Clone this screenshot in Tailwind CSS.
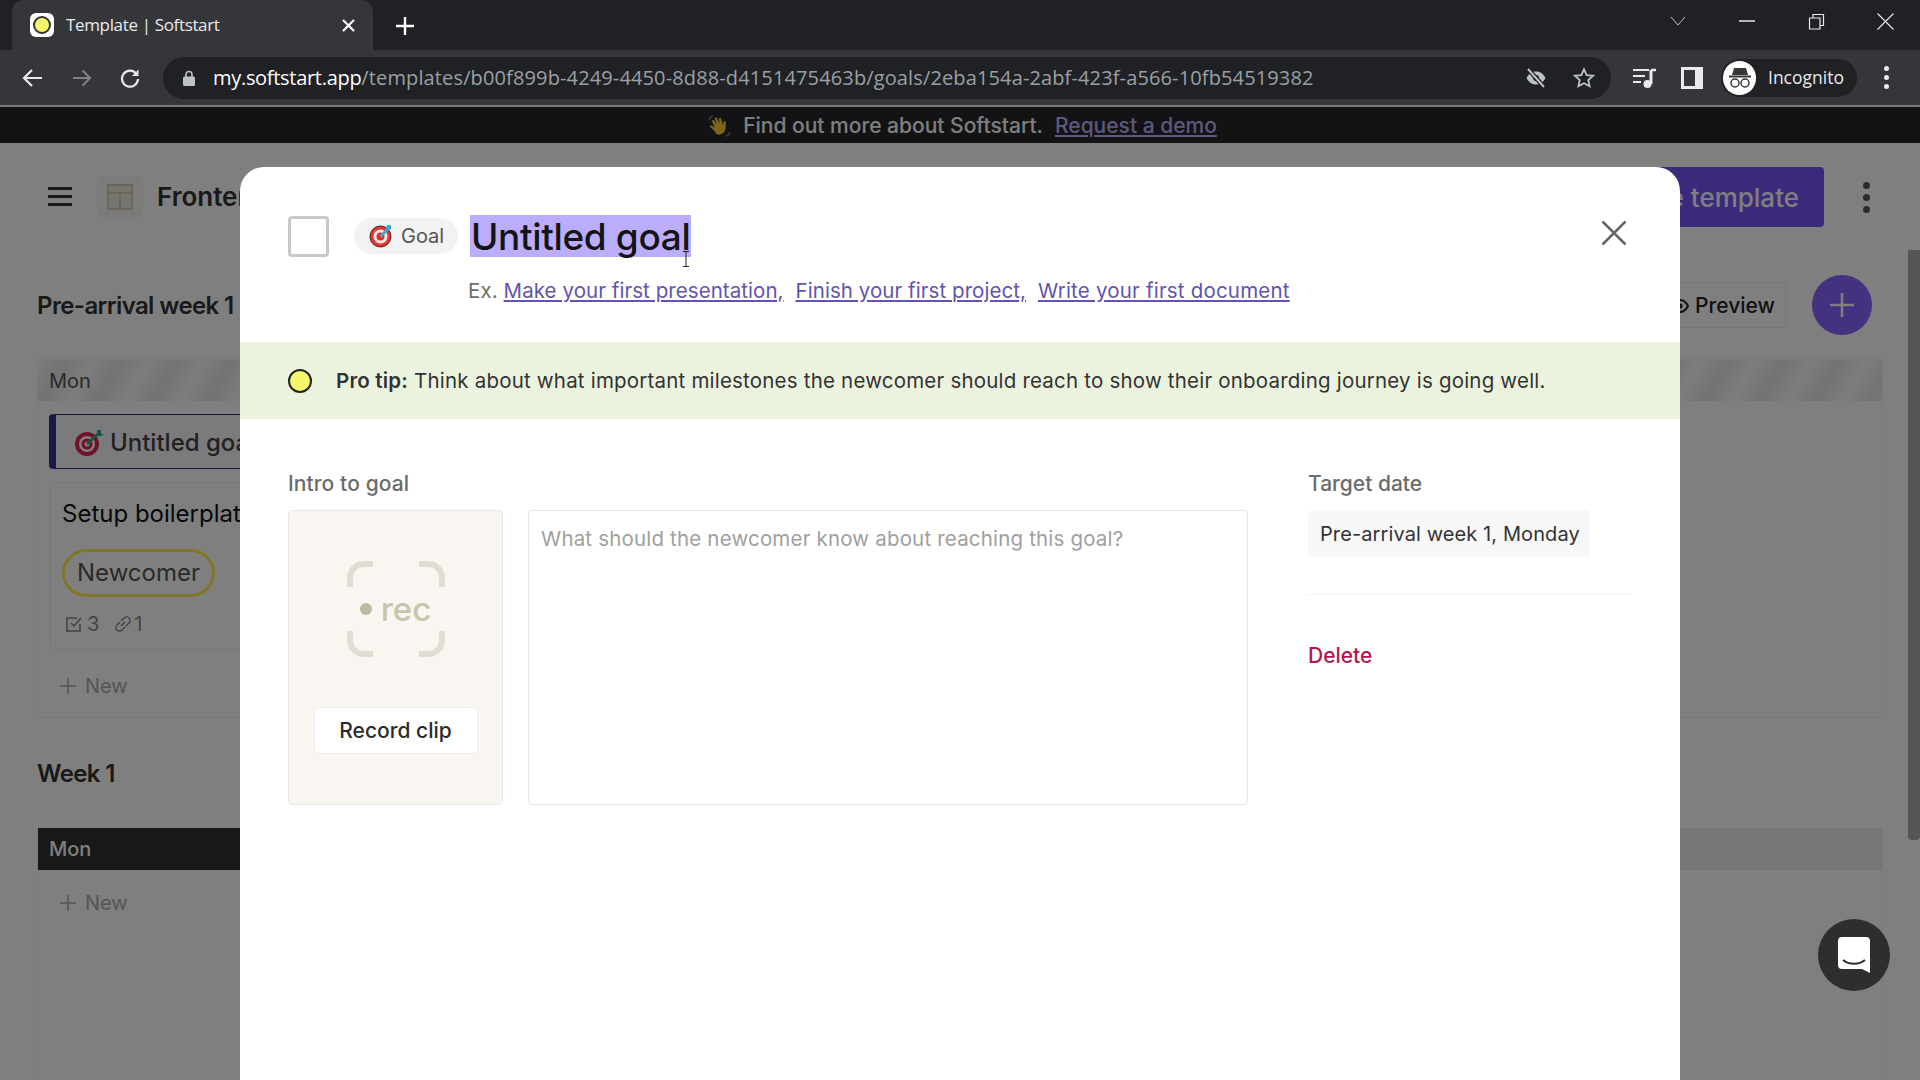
<!DOCTYPE html>
<html lang="en">
<head>
    <meta charset="UTF-8">
    <title>Template | Softstart</title>
    <script src="https://cdn.jsdelivr.net/npm/@tailwindcss/browser@4"></script>
</head>
<body class="h-[1080px] w-[1920px] overflow-hidden flex flex-col bg-white font-['Inter',sans-serif]">

    <!-- Tab strip -->
    <div class="h-[50px] bg-[#202124] flex items-end pl-3 shrink-0">
        <div class="h-[50px] w-[361px] bg-[#35363a] rounded-t-xl flex items-center pl-[18px] pr-[18px] text-white">
            <div class="w-6 h-6 bg-white rounded-md flex items-center justify-center">
                <div class="w-[18px] h-[18px] rounded-full bg-[#f5f76b] border-2 border-[#333]"></div>
            </div>
            <span class="ml-3 text-[17px] font-['Open_Sans',sans-serif] text-[#e8eaed] tracking-[-0.35px]">Template | Softstart</span>
            <svg class="ml-auto" width="13" height="13" viewBox="0 0 13 13"><path d="M1 1 12 12M12 1 1 12" stroke="#fff" stroke-width="2.2"/></svg>
        </div>
        <svg class="ml-[22px] mb-[14px]" width="20" height="20" viewBox="0 0 20 20"><path d="M10 1v18M1 10h18" stroke="#fff" stroke-width="2.4"/></svg>
        <div class="ml-auto flex items-center h-[50px] pb-2">
            <svg width="16" height="10" viewBox="0 0 16 10"><path d="M1 1l7 8 7-8" fill="none" stroke="#bdc1c6" stroke-width="1"/></svg>
            <svg class="ml-[53px]" width="16" height="2" viewBox="0 0 16 2"><path d="M0 1h16" stroke="#e8eaed" stroke-width="1.5"/></svg>
            <svg class="ml-[53px]" width="17" height="17" viewBox="0 0 17 17"><path d="M1.500 5h10.500v11h-10.500zM5 5V1.500h10.500V12.500H12" fill="none" stroke="#e8eaed" stroke-width="1.2"/></svg>
            <svg class="ml-[52px] mr-[26px]" width="17" height="17" viewBox="0 0 17 17"><path d="M.5.5l16 16M16.500.5l-16 16" stroke="#e8eaed" stroke-width="1.1"/></svg>
        </div>
    </div>

    <!-- Toolbar -->
    <div class="h-[57px] bg-[#35363a] border-b-2 border-[#77787a] flex items-center shrink-0">
        <svg class="ml-[22px]" width="21" height="20" viewBox="0 0 21 20"><path d="M20 10H3M10 2l-8 8 8 8" fill="none" stroke="#e8eaed" stroke-width="2.200"/></svg>
        <svg class="ml-[29px]" width="20" height="20" viewBox="0 0 21 20"><path d="M1 10h17M11 2l8 8-8 8" fill="none" stroke="#808285" stroke-width="2.200"/></svg>
        <svg class="ml-[28px]" width="20" height="20" viewBox="0 0 20 20"><path d="M16.500 6A8 8 0 1 0 18 11" fill="none" stroke="#e8eaed" stroke-width="2.200"/><path d="M18.500 1.500v6.500h-6.500z" fill="#e8eaed"/></svg>
        <div class="ml-[23px] h-[42px] w-[1448px] bg-[#202124] rounded-full flex items-center pl-5 pr-4">
            <svg width="12" height="16" viewBox="0 0 12 16"><path d="M3 7V4.500a3 3 0 0 1 6 0V7" fill="none" stroke="#bdc1c6" stroke-width="1.600"/><rect y="6.500" width="12" height="9.500" rx="1.500" fill="#bdc1c6"/></svg>
            <span class="ml-[18px] text-[20px] font-['Open_Sans',sans-serif] tracking-[0.13px] text-[#9aa0a6] whitespace-nowrap"><span class="text-white tracking-[-0.3px]">my.softstart.app</span>/templates/b00f899b-4249-4450-8d88-d4151475463b/goals/2eba154a-2abf-423f-a566-10fb54519382</span>
            <svg class="ml-auto" width="22" height="20" viewBox="0 0 22 20"><path d="M1.500 10C4 5.500 7 3.500 11 3.500s7 2 9.500 6.500C18 14.500 15 16.500 11 16.500S4 14.500 1.500 10z" fill="#bdc1c6"/><circle cx="11" cy="10" r="3" fill="#202124"/><path d="M3 1l16 18" stroke="#202124" stroke-width="4.500"/><path d="M3 1l16 18" stroke="#bdc1c6" stroke-width="2"/></svg>
            <svg class="ml-[26px]" width="22" height="22" viewBox="0 0 24 24"><path d="M12 2.500l2.900 6.300 6.900.8-5.100 4.700 1.400 6.800-6.100-3.400-6.100 3.400 1.400-6.800-5.100-4.700 6.900-.8z" fill="none" stroke="#bdc1c6" stroke-width="2"/></svg>
        </div>
        <svg class="ml-[22px]" width="24" height="22" viewBox="0 0 24 22"><path d="M0 3h16M0 9h12M0 15h8" stroke="#e8eaed" stroke-width="2.200"/><path d="M18 3v14" stroke="#e8eaed" stroke-width="3"/><path d="M18 3h5" stroke="#e8eaed" stroke-width="2.500"/><circle cx="14.500" cy="17" r="4" fill="#e8eaed"/></svg>
        <svg class="ml-[24px]" width="22" height="22" viewBox="0 0 22 22"><rect x="0" y="0" width="22" height="22" fill="#e8eaed"/><rect x="3" y="3" width="11" height="16" fill="#35363a"/></svg>
        <div class="ml-[18px] w-[136px] h-[38px] rounded-full bg-[#202124] flex items-center pl-[2px]">
            <div class="w-[33px] h-[34px] rounded-full bg-white flex items-center justify-center">
                <svg width="24" height="22" viewBox="0 0 24 22"><path d="M6 1h12l2 7H4z" fill="#35363a"/><path d="M1 9.500h22" stroke="#35363a" stroke-width="2"/><circle cx="7" cy="16" r="4" fill="none" stroke="#35363a" stroke-width="1.500"/><circle cx="17" cy="16" r="4" fill="none" stroke="#35363a" stroke-width="1.500"/></svg>
            </div>
            <span class="ml-3 text-[17.500px] font-['Open_Sans',sans-serif] text-[#e8eaed]">Incognito</span>
        </div>
        <div class="ml-[27px] flex flex-col gap-[4px]">
            <div class="w-[5px] h-[5px] rounded-full bg-[#e8eaed]"></div>
            <div class="w-[5px] h-[5px] rounded-full bg-[#e8eaed]"></div>
            <div class="w-[5px] h-[5px] rounded-full bg-[#e8eaed]"></div>
        </div>
    </div>

    <!-- App -->
    <div class="relative flex-1 flex flex-col min-h-0">
        <div class="h-[36px] bg-[#26272a] flex items-center justify-center shrink-0 text-[21px] font-medium text-white gap-3 pl-1 pt-[2px]">
            <svg width="24" height="24" viewBox="0 0 24 24"><g transform="rotate(-28 12 13)"><path d="M6 14 4 8.500l2-.8 2 4 .5-7.700 2.200 0 .6 6 1-7 2.200.4-.5 7 2-5.300 2 .7-1.500 7 2.500-2.500 1.600 1.300-4 6.500a6.500 6.500 0 0 1-10.100 0z" fill="#ffc83d"/></g><path d="M2 6c.5-2 2-3.500 4-4M19 22c2-.5 3.500-2 4-4" fill="none" stroke="#777" stroke-width="1.500"/></svg>
            <span>Find out more about Softstart.</span>
            <span class="text-[#bdb0fb] underline">Request a demo</span>
        </div>

        <div class="flex-1 flex min-h-0">
            <div class="flex-1 min-w-0 pl-[37px] pr-[25px]">
                <!-- Header -->
                <div class="h-[132px] pt-[24px]">
                    <div class="flex items-center w-full h-[60px]">
                        <div class="ml-[11px] -mt-[2px] flex flex-col gap-[5px]">
                            <div class="w-6 h-[3px] bg-[#333]"></div>
                            <div class="w-6 h-[3px] bg-[#333]"></div>
                            <div class="w-6 h-[3px] bg-[#333]"></div>
                        </div>
                        <div class="ml-[25px] w-[46px] h-[42px] rounded-lg bg-[#f8f6f2] flex items-center justify-center">
                            <svg width="26" height="26" viewBox="0 0 26 26"><path d="M1 1h24v24H1zM1 9h24M13 9v16" fill="#efebdf" stroke="#d2cdb8" stroke-width="1.800"/></svg>
                        </div>
                        <span class="ml-[14px] -mt-[1px] text-[26px] font-semibold text-[#333] whitespace-nowrap">Frontend developer</span>
                        <div class="ml-auto h-[60px] w-[300px] bg-[#7654f8] rounded text-white text-[26px] font-medium flex items-center justify-end pr-[25px]">Use template</div>
                        <div class="ml-[39px] mr-[13px] flex flex-col gap-[5px]">
                            <div class="w-[7px] h-[7px] rounded-full bg-[#555]"></div>
                            <div class="w-[7px] h-[7px] rounded-full bg-[#555]"></div>
                            <div class="w-[7px] h-[7px] rounded-full bg-[#555]"></div>
                        </div>
                    </div>
                </div>

                <!-- Pre-arrival week 1 -->
                <div class="h-[60px] flex items-center">
                    <span class="pt-[1px] text-[24px] font-semibold text-[#333] tracking-[-0.6px]">Pre-arrival week 1</span>
                    <div class="ml-auto h-[46px] w-[150px] pt-[1px] border border-[#eee] rounded flex items-center justify-end pr-[10px] gap-[6px] text-[21px] font-medium text-[#222]">
                        <svg width="18" height="18" viewBox="0 0 18 18"><path d="M1 9c2-4 5-6 8-6s6 2 8 6c-2 4-5 6-8 6S3 13 1 9z" fill="none" stroke="#222" stroke-width="2"/><circle cx="9" cy="9" r="2.500" fill="#222"/></svg>
                        Preview
                    </div>
                    <div class="ml-[26px] mr-[11px] w-[60px] h-[60px] rounded-full bg-[#8862ff] flex items-center justify-center">
                        <svg width="26" height="26" viewBox="0 0 26 26"><path d="M13 1v24M1 13h24" stroke="#fff" stroke-width="2.500"/></svg>
                    </div>
                </div>

                <div class="mt-[24px] h-[359px] border border-[#f2f2f2]">
                    <div class="h-[41px] flex items-center pl-[11px] text-[20px] text-[#555] bg-[repeating-linear-gradient(120deg,#fafafa_0,#e6e6e6_24px,#fafafa_48px)]">Mon</div>
                    <div class="ml-[11px] mt-[13px] h-[55px] w-[400px] bg-[#f6f6fa] border border-[#2a2a80] border-l-[7px] border-l-[#34348f] rounded-l flex items-center pl-[18px] text-[24px] font-medium text-[#444]">
                        <svg width="30" height="30" viewBox="0 0 30 30"><circle cx="13" cy="17" r="12" fill="#e02454"/><circle cx="13" cy="17" r="8" fill="#fff"/><circle cx="13" cy="17" r="5.500" fill="#e02454"/><circle cx="13" cy="17" r="2.500" fill="#fff"/><path d="M13 17 26 5" stroke="#2aa693" stroke-width="2.500"/><path d="M23 3h4v4h3l-3 2h-4z" fill="#2aa693"/></svg>
                        <span class="ml-[6px] pt-[2px]">Untitled goal</span>
                    </div>
                    <div class="ml-[12px] mt-[13px] h-[168px] w-[400px] border border-[#eee] rounded pl-[11px] pt-[14px]">
                        <div class="text-[24px] text-[#111] leading-[34px]">Setup boilerplate</div>
                        <div class="mt-[18px] inline-flex items-center h-[48px] px-[12px] rounded-full border-[3px] border-[#ffee50] text-[24px] text-[#555]">Newcomer</div>
                        <div class="mt-[12px] ml-[3px] flex items-center text-[20px] text-[#888]">
                            <svg width="18" height="18" viewBox="0 0 18 18"><path d="M15 9v7H2V3h10" fill="none" stroke="#888" stroke-width="1.600"/><path d="M6 8l3 3 7-8" fill="none" stroke="#888" stroke-width="1.600"/></svg>
                            <span class="ml-[4px]">3</span>
                            <svg class="ml-[15px]" width="18" height="18" viewBox="0 0 18 18"><path d="M7 11 11 7M6 7l-3 3a3.500 3.500 0 0 0 5 5l3-3M12 11l3-3a3.500 3.500 0 0 0-5-5L7 6" fill="none" stroke="#888" stroke-width="1.500"/></svg>
                            <span class="ml-[2px]">1</span>
                        </div>
                    </div>
                    <div class="ml-[21px] mt-[21px] flex items-center gap-[8px] text-[20px] text-[#aaa]">
                        <svg width="18" height="18" viewBox="0 0 18 18"><path d="M9 1v16M1 9h16" stroke="#aaa" stroke-width="1.500"/></svg>New
                    </div>
                </div>

                <!-- Week 1 -->
                <div class="mt-[35px] h-[40px] flex items-center">
                    <span class="pt-[1px] text-[24px] font-semibold text-[#333] tracking-[-0.6px]">Week 1</span>
                </div>
                <div class="mt-[35px] h-[300px] border-l border-r border-[#f2f2f2]">
                    <div class="h-[42px] bg-[#ececec] flex">
                        <div class="w-[300px] h-[42px] bg-[#303030] flex items-center pl-[11px] text-[20px] font-medium text-white">Mon</div>
                    </div>
                    <div class="ml-[21px] mt-[18px] flex items-center gap-[8px] text-[20px] text-[#aaa]">
                        <svg width="18" height="18" viewBox="0 0 18 18"><path d="M9 1v16M1 9h16" stroke="#aaa" stroke-width="1.500"/></svg>New
                    </div>
                </div>
            </div>
            <!-- Scrollbar -->
            <div class="w-3 bg-white shrink-0 pt-[107px]">
                <div class="h-[590px] bg-[#aaa] rounded-b"></div>
            </div>
        </div>

        <!-- Backdrop -->
        <div class="absolute inset-0 bg-black/50"></div>

        <!-- Goal modal -->
        <div class="absolute left-[240px] top-[60px] w-[1440px] bottom-0 bg-white rounded-t-3xl">
            <div class="h-[175px] pl-[48px] pr-[54px] pt-[48px] relative">
                <div class="flex items-center">
                    <div class="w-[41px] h-[41px] border-[3px] border-[#c8c8c8] rounded"></div>
                    <div class="ml-[25px] h-[36px] w-[104px] rounded-full bg-[#f2f2f2] flex items-center pl-[15px] text-[20px] text-[#555]">
                        <svg width="24" height="24" viewBox="0 0 24 24"><circle cx="11.500" cy="12.500" r="10.500" fill="#dc3a32" stroke="#4a2020" stroke-width="1"/><circle cx="11.500" cy="12.500" r="7" fill="#fbe6dc"/><circle cx="11.500" cy="12.500" r="4" fill="#d7342f"/><path d="M11.500 12.500 20 4" stroke="#3ba7d9" stroke-width="3"/><path d="M18 1h4v4l-3 1-2-2z" fill="#3ba7d9"/></svg>
                        <span class="ml-[8px]">Goal</span>
                    </div>
                    <span class="ml-[12px] h-[42px] pt-[1px] flex items-center bg-[#bbadfb] text-[37px] font-medium text-[#141414] tracking-[-0.35px] px-[1px]">Untitled goal</span>
                </div>
                <div class="ml-[180px] mt-[19px] text-[20.500px] tracking-[0.06px] text-[#6e6e6e] flex">
                    <span>Ex.</span>
                    <span class="ml-[6px] text-[#6353b0] underline">Make your first presentation,</span>
                    <span class="ml-[12px] text-[#6353b0] underline">Finish your first project,</span>
                    <span class="ml-[12px] tracking-[0.2px] text-[#6353b0] underline">Write your first document</span>
                </div>
                <svg class="absolute right-[53px] top-[53px]" width="26" height="26" viewBox="0 0 26 26"><path d="M1.500 1.500l23 23M24.500 1.500l-23 23" stroke="#666" stroke-width="2.500"/></svg>
                <!-- Text cursor caught in the capture -->
                <svg class="absolute left-[442px] top-[84px]" width="8" height="16" viewBox="0 0 8 16"><path d="M1 .5h6M1 15.500h6M4 .5v15" fill="none" stroke="#222" stroke-width="1"/></svg>
            </div>
            <div class="h-[77px] bg-[#ebf3df] flex items-center pl-[48px] text-[20.500px] tracking-[0.2px] text-[#333]">
                <div class="w-6 h-6 rounded-full bg-[#f5f76b] border-2 border-[#222]"></div>
                <p class="ml-[24px] pt-[2px]"><b class="font-semibold">Pro tip:</b> Think about what important milestones the newcomer should reach to show their onboarding journey is going well.</p>
            </div>
            <div class="flex pl-[48px] pr-[48px] pt-[50px]">
                <div class="w-[960px]">
                    <div class="text-[21px] tracking-[0.1px] font-medium text-[#6b6b6b] leading-[30px]">Intro to goal</div>
                    <div class="flex mt-[11px] gap-[25px] h-[295px]">
                        <div class="w-[215px] bg-[#f9f5f0] border border-[#e8e8e8] rounded flex flex-col items-center pt-[50px]">
                            <div class="relative w-[98px] h-[96px] flex items-center justify-center">
                                <svg class="absolute inset-0" width="98" height="96" viewBox="0 0 98 96"><path d="M26 3H17A14 14 0 0 0 3 17v9M72 3h9a14 14 0 0 1 14 14v9M26 93H17A14 14 0 0 1 3 79v-9M72 93h9a14 14 0 0 0 14-14v-9" fill="none" stroke="#e2ddd3" stroke-width="6"/></svg>
                                <span class="w-3 h-3 rounded-full bg-[#bdbba3] mr-[9px]"></span>
                                <span class="text-[33px] font-medium text-[#c9c4ad] leading-none">rec</span>
                            </div>
                            <div class="mt-[50px] w-[164px] h-[47px] bg-white border border-[#eee] rounded flex items-center justify-center text-[21px] font-medium text-[#2b2b2b]">Record clip</div>
                        </div>
                        <div class="w-[720px] border border-[#e5e5e5] rounded pl-[12px] pt-[13px] text-[20.500px] tracking-[0.18px] text-[#a0a0a0]">What should the newcomer know about reaching this goal?</div>
                    </div>
                </div>
                <div class="ml-[60px] flex-1">
                    <div class="text-[21px] font-medium text-[#6b6b6b] leading-[30px]">Target date</div>
                    <div class="mt-[11px] w-[282px] h-[47px] bg-[#f8f8f9] rounded flex items-center pl-[12px] text-[20px] tracking-[0.1px] text-[#333] whitespace-nowrap">Pre-arrival week 1, Monday</div>
                    <div class="mt-[37px] border-t border-[#f2f2f2]"></div>
                    <div class="mt-[45px] text-[21px] font-medium text-[#b2164e]">Delete</div>
                </div>
            </div>
        </div>

        <!-- Chat launcher -->
        <div class="absolute left-[1818px] top-[812px] w-[72px] h-[72px] rounded-full bg-[#2e2e2e] flex items-center justify-center">
            <svg width="32" height="36" viewBox="0 0 32 36"><path d="M4 0h24a4 4 0 0 1 4 4v32l-8-4H4a4 4 0 0 1-4-4V4a4 4 0 0 1 4-4z" fill="#fff"/><path d="M5 23c6 5 16 5 22 0" fill="none" stroke="#2e2e2e" stroke-width="2"/></svg>
        </div>
    </div>
</body>
</html>
